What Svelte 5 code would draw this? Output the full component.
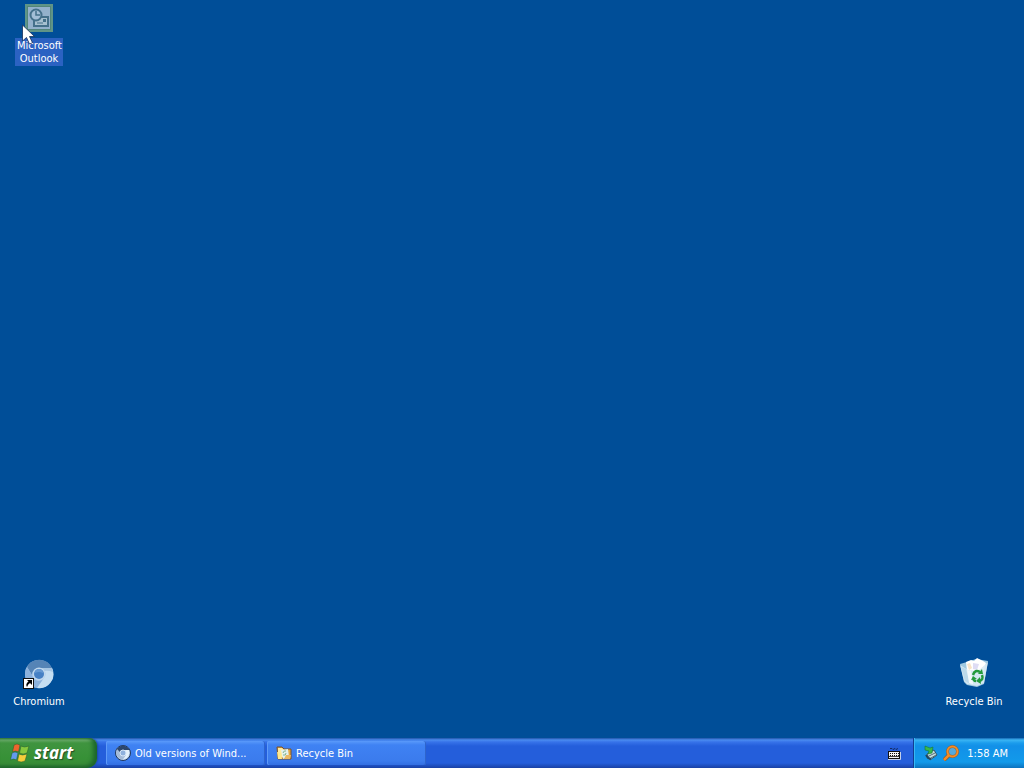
<script>
  const shortcuts = [
    { id: 'outlook', label: 'Microsoft Outlook', selected: true },
    { id: 'chromium', label: 'Chromium', selected: false },
    { id: 'bin', label: 'Recycle Bin', selected: false }
  ];
  const tasks = [
    { id: 'browser', label: 'Old versions of Wind...' },
    { id: 'folder', label: 'Recycle Bin' }
  ];
</script>

<svelte:head><title>Desktop</title></svelte:head>

<div class="screen">
  <main class="desktop">
    {#each shortcuts as item (item.id)}
      <button class="shortcut {item.id}" class:selected={item.selected}>
        {#if item.id === 'outlook'}
          <svg width="32" height="32" viewBox="0 0 32 32" aria-hidden="true">
            <rect x="2" y="2" width="28" height="28" fill="#5f9487" />
            <rect x="4" y="4" width="24" height="24" fill="#528579" />
            <rect x="5" y="5" width="22" height="22" fill="#93b1cb" />
            <path d="M11 18v6h14v-9h-7" fill="#a6c0cf" stroke="#44708a" stroke-width="2" />
            <path d="M14 21h6" stroke="#44708a" />
            <path d="M20 17h3v3h-3z" fill="#44708a" />
            <circle cx="13" cy="13" r="5.500" fill="#a3bed6" stroke="#44708a" stroke-width="2" />
            <path d="M13 9v4h4" fill="none" stroke="#44708a" stroke-width="1.500" />
          </svg>
        {:else if item.id === 'chromium'}
          <svg width="32" height="32" viewBox="0 0 32 32" aria-hidden="true">
            <circle cx="16" cy="16" r="14" fill="#a3c3e7" />
            <path d="M4 9A14 14 0 0 1 29 10H16a7 7 0 0 0-7 7Z" fill="#5584b6" />
            <path d="M4 9A14 14 0 0 0 14 30l6-8-5 1a7 7 0 0 1-6-6Z" fill="#8db2dc" />
            <path d="M29 10A14 14 0 0 1 14 30l7-10q3-4 0-8l-3-2Z" fill="#c5def2" />
            <path d="M17 10h12l1 4q-5-2-9-1Z" fill="#a6c5e2" />
            <circle cx="16" cy="16" r="6.500" fill="#bfd7ed" />
            <circle cx="16" cy="16" r="5" fill="#4680c4" />
            <path d="M12 15a4 4 0 0 1 8 0q-4-2-8 0" fill="#6699d2" />
            <rect x="0.500" y="20.500" width="10" height="10" fill="#fff" stroke="#111" />
            <path d="M4 22h5v5l-2-2q-2 1-3 4-2-3 1.500-5.500Z" fill="#000" />
          </svg>
        {:else}
          <svg width="32" height="32" viewBox="0 0 32 32" aria-hidden="true">
            <path d="m2 6 7-2 9-3 12 2-4 23-7 3-10-2-3-3Z" fill="#9fc8e0" />
            <path d="m8 4 5-2 3 1 3-3 6 3 3 2-3 9-16-1Z" fill="#fff" />
            <path d="m9 6 3-1 2 5-3 2Z" fill="#f8e4c8" />
            <path d="m15 5 6 1-2 6-4-1Z" fill="#dedcf4" />
            <path d="m2 7 8 5 10 1 10-9-4 21-7 3-10-2-3-3Z" fill="#d9eaf4" fill-opacity=".9" />
            <path d="m3 9 5 2 4 15-5-3Z" fill="#bcd9ea" />
            <path d="m9 12 4 1 2 13-4-1Z" fill="#f2f8fb" />
            <g fill="none" stroke="#239a3c" stroke-width="2.500">
              <path d="M15 17q2-6 7-3M24 17q2 5-3 6M18 23q-2 0-3-2" />
            </g>
            <path d="m20 16 5 0-1-5ZM22 19l-4 4 5 3ZM13 22l2-4 4 3Z" fill="#239a3c" />
          </svg>
        {/if}
        <span>{item.label}</span>
      </button>
    {/each}
    <svg class="pointer" width="13" height="22" viewBox="0 0 13 22" aria-hidden="true">
      <path d="M.5 1v16l4-3.500 3 6.500 3-1.300-3-6.200h5Z" fill="#fff" stroke="#16305a" stroke-width=".8" />
    </svg>
  </main>

  <footer class="taskbar">
    <button class="start">
      <svg width="20" height="20" viewBox="0 0 20 20" aria-hidden="true">
        <g stroke="#245c2c" stroke-width=".5">
          <path d="M4 2q3-2 6 0L8.500 9Q5.500 7 2.500 9Z" fill="#ed652d" />
          <path d="M11 3q3 2 8 0l-2 7q-4 2-7.500 0Z" fill="#86c83e" />
          <path d="M2 10q3-2 6 0l-1.500 7q-3-2-6 0Z" fill="#629bed" />
          <path d="M9 11q3 2 8 0l-2 7q-4 2-7.500 0Z" fill="#f6cd3b" />
        </g>
      </svg>
      <span>start</span>
    </button>
    <nav class="tasks" aria-label="Open windows">
      {#each tasks as task (task.id)}
        <button class="task">
          {#if task.id === 'browser'}
            <svg width="16" height="16" viewBox="0 0 16 16" aria-hidden="true">
              <circle cx="8" cy="8" r="7.500" fill="#b6cde8" stroke="#1d355c" />
              <path d="M1 5Q8-4 15 5H8L5 9Z" fill="#2c466c" />
              <path d="M2 4q-3 7 5 11l3-4q-5 0-5-4Z" fill="#a4bbd8" />
              <path d="M10 5h4q2 7-6 10l3-5Z" fill="#e4f1fb" />
              <circle cx="8" cy="8" r="3" fill="#8fb1dd" stroke="#d6e6f7" />
            </svg>
          {:else}
            <svg width="16" height="16" viewBox="0 0 16 16" aria-hidden="true">
              <path d="M1 2h5l2 2h7v10H2Z" fill="#e3a844" stroke="#76502d" />
              <path d="M2 3h4l2 2v7H2Z" fill="#ffeaa0" />
              <path d="m5 5 7-1 1 8-6 2Z" fill="#e4f1ec" />
              <path d="m1 7 4 1 1 6H2Z" fill="#ffe88d" />
              <path d="m8 14 2-4h5l-1 4Z" fill="#e9b763" />
              <path d="M7 8q1-3 3-2M10 8q0 3-3 2" stroke="#83b392" fill="none" />
            </svg>
          {/if}
          <span>{task.label}</span>
        </button>
      {/each}
    </nav>
    <button class="keyboard" aria-label="Keyboard">
      <svg width="14" height="13" viewBox="0 0 14 13" aria-hidden="true">
        <path d="M3 1.500h2l1 1 2-1 1 1 2-1" fill="none" stroke="#142c62" />
        <rect x="1" y="4" width="12" height="8" fill="#111" />
        <rect x="2" y="5" width="10" height="6" fill="#f4f4f4" />
        <path d="M3 6.500h9M3 8.500h9" stroke="#111" stroke-dasharray="1 1" />
        <path d="M2 9.500h10" stroke="#444" />
        <path d="M1 12.500h12.500V5" fill="none" stroke="#c3d0ea" />
      </svg>
    </button>
    <div class="tray">
      <button aria-label="Safely remove hardware">
        <svg width="16" height="16" viewBox="0 0 16 16" aria-hidden="true">
          <path d="m4 9 7-4 3 5-7 5Z" fill="#c7dddb" stroke="#34566b" />
          <path d="m6 11 6-3M8 13l5-3" stroke="#536e7b" />
          <path d="m2 1 5 2 3-1-1 6-4 1 1-3-4-1Z" fill="#39b94a" stroke="#16773a" stroke-width=".6" />
          <path d="m3 10 2 3 3 1" fill="none" stroke="#24465e" stroke-width="2" />
        </svg>
      </button>
      <button aria-label="Search">
        <svg width="16" height="16" viewBox="0 0 16 16" aria-hidden="true">
          <path d="m6 10-5 5" stroke="#7d5a3a" stroke-width="4" />
          <circle cx="9.500" cy="6.500" r="5" fill="#55a9dc" stroke="#8b6038" stroke-width="3" />
          <circle cx="9.500" cy="6.500" r="5" fill="none" stroke="#f58c25" stroke-width="2" />
          <path d="m6 10-5 5" stroke="#f58c25" stroke-width="2.500" />
        </svg>
      </button>
      <time datetime="01:58">1:58 AM</time>
    </div>
  </footer>
</div>

<style>
  :global(body) { margin: 0; }
  .screen {
    min-height: 100vh;
    display: flex;
    flex-direction: column;
    background: #004e98;
    color: #fff;
    font: 11px/13px "DejaVu Sans Condensed", "Noto Sans", sans-serif;
  }
  button {
    font: inherit;
    color: inherit;
    border: 0;
    margin: 0;
    padding: 0;
    background: none;
  }
  svg { display: block; flex: none; }
  .desktop { position: relative; flex: 1; }
  .shortcut {
    position: absolute;
    width: 74px;
    display: flex;
    flex-direction: column;
    align-items: center;
    gap: 4px;
  }
  .shortcut span { padding: 1px 2px; }
  .outlook { left: 2px; top: 2px; }
  .outlook span { width: 44px; }
  .selected span { background: #2b62c2; }
  .chromium { left: 2px; bottom: 29px; }
  .bin { right: 13px; bottom: 29px; }
  .pointer { position: absolute; left: 22px; top: 24px; }
  .taskbar {
    height: 30px;
    display: flex;
    background: linear-gradient(#2054a8 0, #4a8cf0 2px, #3773e9 4px, #245edb 8px, #245edb 25px, #1941a5 30px);
  }
  .start {
    width: 97px;
    display: flex;
    align-items: center;
    gap: 4px;
    padding-left: 10px;
    border-radius: 0 8px 10px 0;
    background: linear-gradient(#347c3d 0, #68aa68 2px, #3f943f 5px, #379137 20px, #388c37 26px, #246b2e 30px);
    box-shadow: inset -4px -1px 4px #1c662b, 1px 0 2px #1c48a4;
    font: italic bold 17px/24px "Open Sans", "Noto Sans", sans-serif;
    text-shadow: 1px 1px 1px #234b25;
  }
  .tasks { flex: 1; min-width: 0; display: flex; gap: 2px; padding: 3px 0 3px 9px; }
  .task {
    flex: 0 1 159px;
    min-width: 0;
    display: flex;
    align-items: center;
    gap: 4px;
    padding-left: 9px;
    border-radius: 2px;
    background: linear-gradient(#5a9afa 0, #3f82f3 4px, #3b7bed 20px, #336fe2 24px);
    box-shadow: inset 1px 0 #5f9bf8, inset -1px 0 #2e64cc;
    white-space: nowrap;
  }
  .task span { overflow: hidden; }
  .keyboard { width: 14px; margin-right: 12px; }
  .tray {
    display: flex;
    align-items: center;
    gap: 4px;
    padding: 0 16px 0 9px;
    border-left: 1px solid #123e91;
    background: linear-gradient(#1668b4 0, #3bb5f4 2px, #1b9cec 5px, #1290e8 8px, #129aea 24px, #0c72be 30px);
    box-shadow: inset 1px 0 #37b9f5;
  }
  .tray time { margin-left: 4px; }
</style>
